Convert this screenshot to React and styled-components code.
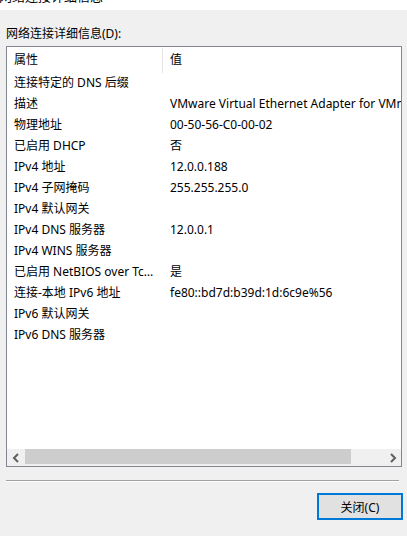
import styled, { createGlobalStyle } from "styled-components";

const GlobalStyle = createGlobalStyle`
  html, body {
    margin: 0;
    padding: 0;
    background: #f0f0f0;
  }
  body {
    font-family: "Noto Sans", "Noto Sans CJK SC", sans-serif;
    font-size: 12px;
    color: #000;
  }
`;

const Dialog = styled.div`
  width: 407px;
  height: 536px;
  background: #f0f0f0;
  overflow: hidden;
  display: flex;
  flex-direction: column;
`;

const TitleStrip = styled.div`
  height: 10px;
  background: #fff;
  overflow: hidden;
`;

const TitleText = styled.div`
  font-size: 13px;
  line-height: 16px;
  margin-top: -12px;
  margin-left: -1px;
  white-space: nowrap;
`;

const Label = styled.div`
  margin: 16px 0 4px 6px;
  height: 16px;
  line-height: 16px;
`;

const ListBox = styled.div`
  margin-left: 6px;
  width: 394px;
  height: 419px;
  border: 1px solid #828790;
  background: #fff;
  display: flex;
  flex-direction: column;
  overflow: hidden;
`;

const Rows = styled.div`
  flex: 1;
  overflow: hidden;
`;

const Header = styled.div`
  display: flex;
  height: 25px;
  align-items: center;
  padding-top: 2px;
  box-sizing: border-box;
`;

const HeaderCell = styled.div`
  width: ${(p) => p.$w}px;
  flex-shrink: 0;
  padding-left: 7px;
  box-sizing: border-box;
  height: 25px;
  line-height: 23px;
  border-right: ${(p) => (p.$sep ? "1px solid #e5e5e5" : "none")};
`;

const Row = styled.div`
  display: flex;
  height: 21px;
  line-height: 21px;
  white-space: nowrap;
`;

const Cell = styled.div`
  width: ${(p) => p.$w}px;
  flex-shrink: 0;
  padding-left: 7px;
  padding-right: 3px;
  box-sizing: border-box;
  overflow: hidden;
  text-overflow: ellipsis;
`;

const ScrollBar = styled.div`
  height: 17px;
  flex-shrink: 0;
  background: #f0f0f0;
  display: flex;
  align-items: stretch;
`;

const Arrow = styled.div`
  width: 17px;
  flex-shrink: 0;
  display: flex;
  align-items: center;
  justify-content: center;
`;

const Track = styled.div`
  flex: 1;
  display: flex;
  align-items: stretch;
  padding: 0 1px;
`;

const Thumb = styled.div`
  width: 326px;
  background: #cdcdcd;
  margin-bottom: 2px;
`;

const Separator = styled.div`
  margin: 13px 0 0 6px;
  width: 393px;
  height: 1px;
  background: #a0a0a0;
  border-bottom: 1px solid #fff;
`;

const Footer = styled.div`
  display: flex;
  justify-content: flex-end;
  padding: 11px 4px 0 0;
`;

const Button = styled.button`
  width: 86px;
  height: 27px;
  box-sizing: border-box;
  border: 2px solid #0078d7;
  background: #e1e1e1;
  font-family: inherit;
  font-size: 12px;
  color: #000;
  padding: 0;
  margin: 0;
`;

const rows = [
  ["连接特定的 DNS 后缀", ""],
  ["描述", "VMware Virtual Ethernet Adapter for VMnet1"],
  ["物理地址", "00-50-56-C0-00-02"],
  ["已启用 DHCP", "否"],
  ["IPv4 地址", "12.0.0.188"],
  ["IPv4 子网掩码", "255.255.255.0"],
  ["IPv4 默认网关", ""],
  ["IPv4 DNS 服务器", "12.0.0.1"],
  ["IPv4 WINS 服务器", ""],
  ["已启用 NetBIOS over Tcpip", "是"],
  ["连接-本地 IPv6 地址", "fe80::bd7d:b39d:1d:6c9e%56"],
  ["IPv6 默认网关", ""],
  ["IPv6 DNS 服务器", ""],
];

const Chevron = ({ dir }) => (
  <svg width="8" height="10" viewBox="0 0 8 10">
    <path
      d={dir === "left" ? "M6 1 L2 5 L6 9" : "M2 1 L6 5 L2 9"}
      fill="none"
      stroke="#606060"
      strokeWidth="2"
    />
  </svg>
);

export default function App() {
  return (
    <Dialog>
      <GlobalStyle />
      <TitleStrip>
        <TitleText>网络连接详细信息</TitleText>
      </TitleStrip>
      <Label>网络连接详细信息(D):</Label>
      <ListBox>
        <Rows>
          <Header>
            <HeaderCell $w={156} $sep>属性</HeaderCell>
            <HeaderCell $w={400}>值</HeaderCell>
          </Header>
          {rows.map(([k, v]) => (
            <Row key={k}>
              <Cell $w={156}>{k}</Cell>
              <Cell $w={400}>{v}</Cell>
            </Row>
          ))}
        </Rows>
        <ScrollBar>
          <Arrow>
            <Chevron dir="left" />
          </Arrow>
          <Track>
            <Thumb />
          </Track>
          <Arrow>
            <Chevron dir="right" />
          </Arrow>
        </ScrollBar>
      </ListBox>
      <Separator />
      <Footer>
        <Button>关闭(C)</Button>
      </Footer>
    </Dialog>
  );
}
